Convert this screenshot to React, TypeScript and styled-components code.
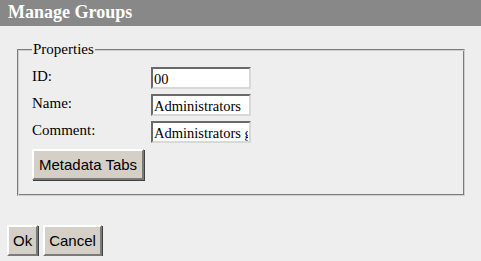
import styled, { createGlobalStyle } from 'styled-components'

const GlobalStyle = createGlobalStyle`
  html, body {
    margin: 0;
    padding: 0;
    background: #eeeeee;
  }
  body {
    font-family: "Liberation Serif", "Times New Roman", serif;
    font-size: 15px;
    color: #000;
  }
`

const fields = [
  { label: 'ID:', value: '00' },
  { label: 'Name:', value: 'Administrators' },
  { label: 'Comment:', value: 'Administrators group' },
]

export default function App() {
  return (
    <>
      <GlobalStyle />
      <Header>Manage Groups</Header>

      <Form onSubmit={(e) => e.preventDefault()}>
        <Properties>
          <Legend>Properties</Legend>
          <FieldGrid>
            {fields.map((field) => (
              <Row key={field.label}>
                <Label>{field.label}</Label>
                <TextInput type="text" defaultValue={field.value} />
              </Row>
            ))}
          </FieldGrid>
          <Button type="button">Metadata Tabs</Button>
        </Properties>

        <Actions>
          <Button type="submit">Ok</Button>
          <Button type="button">Cancel</Button>
        </Actions>
      </Form>
    </>
  )
}

const Header = styled.h1`
  margin: 0;
  height: 26px;
  padding: 0 8px;
  background: #888888;
  color: #ffffff;
  font-family: "Liberation Serif", "Times New Roman", serif;
  font-size: 18px;
  font-weight: bold;
  line-height: 25px;
`

const Form = styled.form`
  margin: 0;
  padding: 15px 16px 0 17px;
`

const Properties = styled.fieldset`
  margin: 0;
  padding: 8px 12px 15px 14px;
  border-style: solid;
  border-width: 1px;
  border-color: #7c7c7c #d0d0d0 #d0d0d0 #7c7c7c;
  box-shadow: inset 1px 1px 0 #d0d0d0, inset -1px -1px 0 #7c7c7c;
  min-width: 0;
`

const Legend = styled.legend`
  padding: 0 1px;
  margin-left: 0;
  background: #eeeeee;
  font-size: 15px;
  line-height: 17px;
`

const FieldGrid = styled.div`
  display: grid;
  row-gap: 5px;
  margin-top: 1px;
`

const Row = styled.div`
  display: grid;
  grid-template-columns: 119px 100px;
  align-items: start;
`

const Label = styled.label`
  padding-top: 1px;
  font-size: 15px;
  line-height: 17px;
`

const TextInput = styled.input`
  box-sizing: border-box;
  width: 100px;
  height: 22px;
  margin: 0;
  padding: 2px 1px 0;
  background: #ffffff;
  border-style: solid;
  border-width: 2px;
  border-color: #6a6a6a #d8d8d8 #d8d8d8 #6a6a6a;
  font-family: "Liberation Serif", "Times New Roman", serif;
  font-size: 14.5px;
  color: #000;
  outline: none;
`

const Button = styled.button`
  box-sizing: border-box;
  height: 31px;
  margin: 0;
  padding: 0 4px;
  background: #d4d0c8;
  border-style: solid;
  border-width: 2px;
  border-color: #ffffff #7a7a7a #7a7a7a #ffffff;
  box-shadow: 1px 1px 0 #404040;
  font-family: "Liberation Sans", Arial, sans-serif;
  font-size: 15px;
  color: #000;
  cursor: pointer;

  fieldset > & {
    margin: 6px 0 0 0;
    padding: 0 5px;
  }
`

const Actions = styled.div`
  display: flex;
  gap: 5px;
  margin-top: 29px;
  margin-left: -10px;
`
